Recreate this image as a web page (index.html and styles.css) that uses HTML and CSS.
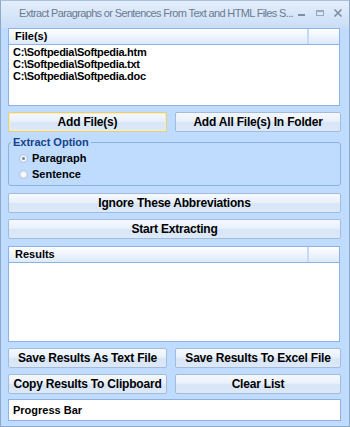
FILE: index.html
```html
<!DOCTYPE html>
<html lang="en">
<head>
    <meta charset="UTF-8">
    <title>Extract Paragraphs or Sentences From Text and HTML Files Software</title>
    <link rel="stylesheet" href="styles.css">
</head>
<body>
    <div class="window">
        <div class="titlebar">
            <span class="title">Extract Paragraphs or Sentences From Text and HTML Files S...</span>
            <div class="controls">
                <svg width="10" height="10" viewBox="0 0 10 10"><rect x="1" y="6" width="7" height="2" fill="#7d8da3"/></svg>
                <svg width="10" height="10" viewBox="0 0 10 10"><rect x="1.5" y="2.5" width="7" height="5" fill="none" stroke="#9aa9bd"/><rect x="1" y="2" width="8" height="2" fill="#9aa9bd"/></svg>
                <svg width="10" height="10" viewBox="0 0 10 10"><path d="M1.5 1.5 L8.5 8.5 M8.5 1.5 L1.5 8.5" stroke="#7d8da3" stroke-width="1.6"/></svg>
            </div>
        </div>
        <div class="client">
            <div class="listbox files">
                <div class="list-header">
                    <span class="col-main">File(s)</span>
                    <span class="col-rest"></span>
                </div>
                <div class="list-body">
                    <div class="item">C:\Softpedia\Softpedia.htm</div>
                    <div class="item">C:\Softpedia\Softpedia.txt</div>
                    <div class="item">C:\Softpedia\Softpedia.doc</div>
                </div>
            </div>

            <div class="button-row">
                <button class="btn left focused">Add File(s)</button>
                <button class="btn">Add All File(s) In Folder</button>
            </div>

            <fieldset class="group">
                <legend>Extract Option</legend>
                <label class="radio"><span class="dot checked"></span>Paragraph</label>
                <label class="radio"><span class="dot"></span>Sentence</label>
            </fieldset>

            <button class="btn wide">Ignore These Abbreviations</button>
            <button class="btn wide">Start Extracting</button>

            <div class="listbox results">
                <div class="list-header">
                    <span class="col-main">Results</span>
                    <span class="col-rest"></span>
                </div>
                <div class="list-body"></div>
            </div>

            <div class="button-row">
                <button class="btn left">Save Results As Text File</button>
                <button class="btn">Save Results To Excel File</button>
            </div>
            <div class="button-row">
                <button class="btn left">Copy Results To Clipboard</button>
                <button class="btn">Clear List</button>
            </div>

            <div class="progress">Progress Bar</div>
        </div>
    </div>
</body>
</html>
```

FILE: styles.css
```css
body {
    margin: 0;
    padding: 0;
    font-family: 'Liberation Sans', Arial, sans-serif;
    background-color: #bfdbfe;
}
.window {
    width: 350px;
    height: 427px;
    box-sizing: border-box;
    border: 1px solid #8ea8c8;
    border-top-color: #a9c0dc;
    background-color: #bfdbfe;
    display: flex;
    flex-direction: column;
    overflow: hidden;
}
.titlebar {
    height: 27px;
    flex: none;
    display: flex;
    align-items: center;
    padding: 0 6px 0 18px;
    background: linear-gradient(#e4eefb, #cadef7);
}
.title {
    flex: 1;
    min-width: 0;
    font-family: 'Liberation Sans', Arial, sans-serif;
    font-size: 11px;
    letter-spacing: -0.65px;
    color: #6a7a90;
    white-space: nowrap;
    margin-top: -4px;
}
.controls {
    display: flex;
    gap: 8px;
    margin-top: -4px;
}
.client {
    padding: 0 8px 0 7px;
    display: flex;
    flex-direction: column;
}
.listbox {
    border: 1px solid #8db2e3;
    background-color: #ffffff;
    margin-right: 1px;
}
.files {
    height: 76px;
}
.results {
    height: 94px;
    margin-top: 7px;
}
.list-header {
    display: flex;
    height: 15px;
    border-bottom: 1px solid #8db2e3;
    background: linear-gradient(#ffffff, #dce9fc);
    font-size: 11px;
    font-weight: bold;
    line-height: 15px;
}
.col-main {
    flex: 1;
    padding-left: 6px;
    border-right: 2px solid #c6daf6;
}
.col-rest {
    width: 30px;
}
.list-body {
    padding: 1px 0 0 4px;
}
.item {
    font-size: 11px;
    font-weight: bold;
    line-height: 12px;
    letter-spacing: -0.3px;
}
.button-row {
    display: flex;
    gap: 8px;
    margin-top: 6px;
}
.btn {
    flex: 1;
    height: 20px;
    padding: 0;
    border: 1px solid #a3bcdc;
    border-radius: 2px;
    background: linear-gradient(#f6f9fe 0%, #e9f1fb 45%, #d7e5f6 55%, #dde9f8 100%);
    font-family: 'Liberation Sans', Arial, sans-serif;
    font-size: 12px;
    font-weight: bold;
    color: #000000;
    letter-spacing: -0.2px;
}
.btn.left {
    flex: none;
    width: 159px;
}
.btn.focused {
    border-color: #e3cf82;
    box-shadow: inset 0 0 0 1px #f7ecbf;
}
.btn.wide {
    flex: none;
    width: 100%;
    margin-top: 6px;
}
.btn.wide:first-of-type {
    margin-top: 7px;
}
.group {
    margin: 4px 0 0 0;
    padding: 2px 0 0 10px;
    height: 46px;
    border: 1px solid #8db2e3;
    border-radius: 3px;
}
.group legend {
    padding: 0 2px;
    margin-left: -8px;
    font-size: 11px;
    font-weight: bold;
    color: #15428b;
}
.radio {
    display: flex;
    align-items: center;
    height: 16px;
    font-size: 11px;
    font-weight: bold;
}
.dot {
    width: 9px;
    height: 9px;
    margin-right: 4px;
    border-radius: 50%;
    border: 1px solid #b4c4d8;
    background: radial-gradient(#ffffff, #dde6f0);
    box-sizing: border-box;
}
.dot.checked {
    background: radial-gradient(#6a7f99 0, #8a9cb3 25%, #f4f7fb 40%, #dce4ee 100%);
}
.progress {
    margin-top: 5px;
    height: 20px;
    border: 1px solid #8db2e3;
    background-color: #ffffff;
    font-size: 11px;
    font-weight: bold;
    line-height: 20px;
    padding-left: 4px;
}
```
